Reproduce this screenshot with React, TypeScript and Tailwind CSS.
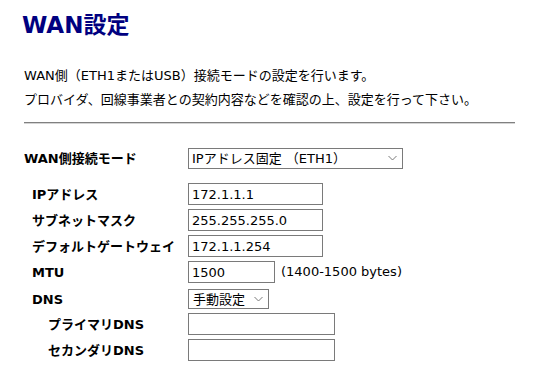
import React from 'react'

const font = { fontFamily: '"DejaVu Sans", "Noto Sans CJK JP", sans-serif' }

const Chevron: React.FC = () => (
  <svg
    className="pointer-events-none absolute right-[6px] top-1/2 -translate-y-1/2"
    width="9"
    height="5"
    viewBox="0 0 9 5"
    fill="none"
  >
    <path d="M0.5 0.5 L4.5 4.5 L8.5 0.5" stroke="#7a7a7a" strokeWidth="1" />
  </svg>
)

interface RowProps {
  label: string
  indent: string
  children: React.ReactNode
}

const Row: React.FC<RowProps> = ({ label, indent, children }) => (
  <div className="grid grid-cols-[164px_1fr] items-center h-[22px]">
    <label className={`${indent} text-[13px] font-bold leading-none whitespace-nowrap`}>{label}</label>
    <div className="flex items-center">{children}</div>
  </div>
)

const TextBox: React.FC<{ value?: string; width: string }> = ({ value = '', width }) => (
  <input
    defaultValue={value}
    className={`${width} h-[22px] border border-[#7a7a7a] bg-white px-[3px] text-[13px] text-black outline-none`}
    style={font}
  />
)

export default function App() {
  return (
    <div className="w-[536px] h-[377px] overflow-hidden bg-white text-black" style={font}>
      <h1 className="pl-[22px] pt-[10px] text-[23px] font-bold leading-[30px] text-[#000080]">WAN設定</h1>

      <p className="mt-[24px] pl-[24px] text-[13px] leading-[24px]">
        WAN側（ETH1またはUSB）接続モードの設定を行います。
        <br />
        プロバイダ、回線事業者との契約内容などを確認の上、設定を行って下さい。
      </p>

      <div className="ml-[24px] mt-[10px] w-[491px] border-t border-[#808080] border-b border-b-[#d4d4d4]" />

      <div className="pl-[24px] mt-[22px]">
        <div className="grid grid-cols-[164px_1fr] items-center h-[21px]">
          <label className="text-[13px] font-bold leading-none whitespace-nowrap">WAN側接続モード</label>
          <div className="relative w-[215px]">
            <select
              defaultValue="eth1"
              className="appearance-none w-[215px] h-[21px] border border-[#7a7a7a] bg-white pl-[3px] text-[13px] text-black outline-none"
              style={font}
            >
              <option value="eth1">IPアドレス固定 （ETH1）</option>
              <option value="dhcp">DHCP （ETH1）</option>
              <option value="usb">USB</option>
            </select>
            <Chevron />
          </div>
        </div>

        <div className="mt-[16px] flex flex-col gap-[4px]">
          <Row label="IPアドレス" indent="pl-[8px]">
            <TextBox value="172.1.1.1" width="w-[135px]" />
          </Row>
          <Row label="サブネットマスク" indent="pl-[8px]">
            <TextBox value="255.255.255.0" width="w-[135px]" />
          </Row>
          <Row label="デフォルトゲートウェイ" indent="pl-[8px]">
            <TextBox value="172.1.1.254" width="w-[135px]" />
          </Row>
          <Row label="MTU" indent="pl-[8px]">
            <TextBox value="1500" width="w-[87px]" />
            <span className="ml-[6px] text-[13px]">(1400-1500 bytes)</span>
          </Row>
          <Row label="DNS" indent="pl-[8px]">
            <div className="relative w-[81px]">
              <select
                defaultValue="manual"
                className="appearance-none w-[81px] h-[20px] border border-[#7a7a7a] bg-white pl-[4px] text-[13px] text-black outline-none"
                style={font}
              >
                <option value="manual">手動設定</option>
                <option value="auto">自動取得</option>
              </select>
              <Chevron />
            </div>
          </Row>
          <Row label="プライマリDNS" indent="pl-[24px]">
            <TextBox width="w-[147px]" />
          </Row>
          <Row label="セカンダリDNS" indent="pl-[24px]">
            <TextBox width="w-[147px]" />
          </Row>
        </div>
      </div>
    </div>
  )
}
